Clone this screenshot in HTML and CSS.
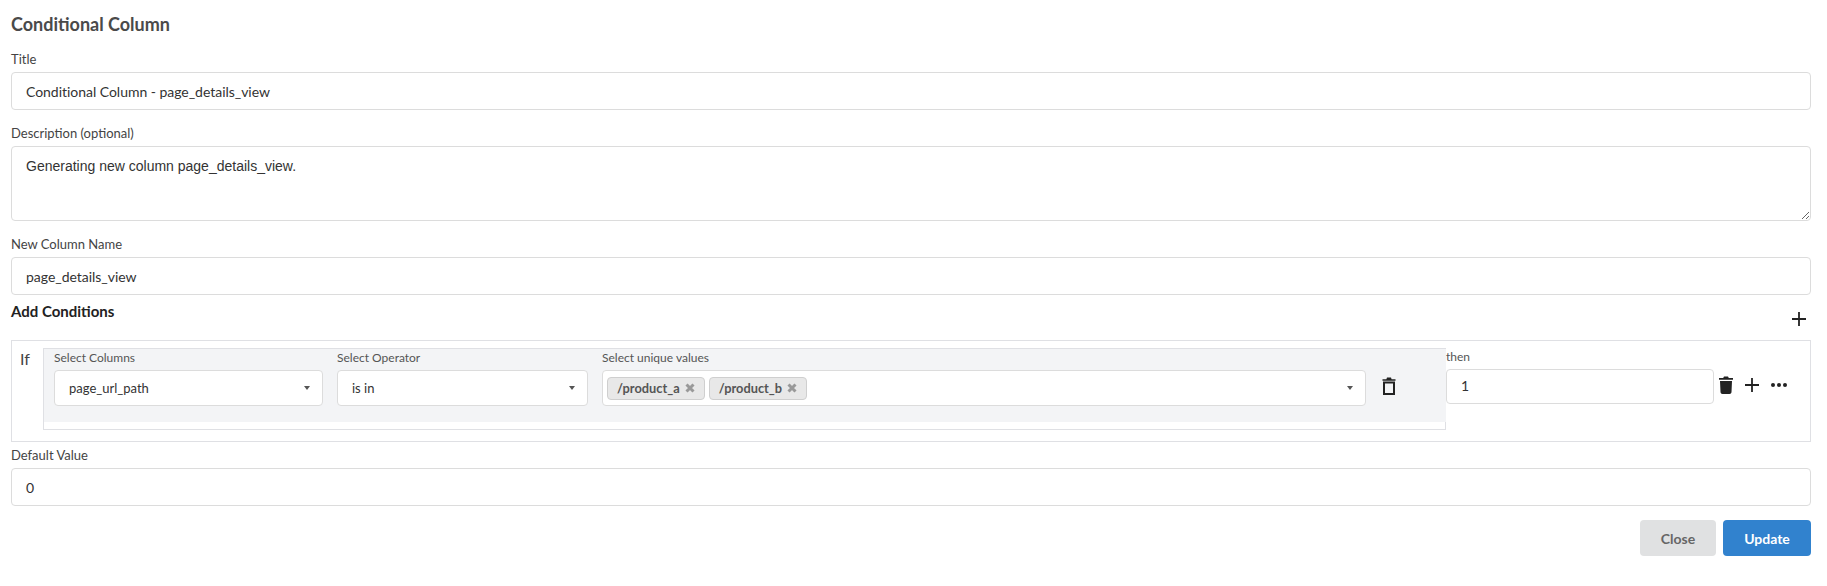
FILE: index.html
```
<!DOCTYPE html>
<html lang="en">
<head>
<meta charset="utf-8">
<title>Conditional Column</title>
<link rel="stylesheet" href="styles.css">
</head>
<body>
<main class="page">
  <h2 class="heading">Conditional Column</h2>
  <div class="group">
    <label class="label">Title</label>
    <div class="input">Conditional Column - page_details_view</div>
  </div>
  <div class="group">
    <label class="label">Description (optional)</label>
    <textarea class="textarea" spellcheck="false">Generating new column page_details_view.</textarea>
  </div>
  <div class="group-last">
    <label class="label">New Column Name</label>
    <div class="input">page_details_view</div>
  </div>
  <div class="conditions-head">
    <h3 class="subheading">Add Conditions</h3>
    <svg class="plus top-plus" viewBox="0 0 14 14" width="14" height="14"><path d="M7 0v14M0 7h14"/></svg>
  </div>
  <section class="conditions">
    <div class="if">If</div>
    <div class="clause">
      <div class="clause-fill">
        <div class="field-grid">
          <div>
            <div class="small-label">Select Columns</div>
            <div class="select">page_url_path<span class="caret"></span></div>
          </div>
          <div>
            <div class="small-label">Select Operator</div>
            <div class="select">is in<span class="caret"></span></div>
          </div>
          <div>
            <div class="small-label">Select unique values</div>
            <div class="select multi">
              <span class="chip">/product_a<svg class="chip-x" viewBox="0 0 10 10" width="10" height="10"><path d="M1.500 1.500l7 7M8.500 1.500l-7 7"/></svg></span>
              <span class="chip">/product_b<svg class="chip-x" viewBox="0 0 10 10" width="10" height="10"><path d="M1.500 1.500l7 7M8.500 1.500l-7 7"/></svg></span>
              <span class="caret"></span>
            </div>
          </div>
          <svg class="trash-outline" viewBox="0 0 14 18" width="14" height="18"><path class="fill" d="M.5 2.200h3.900L5 .5h4l.6 1.700h3.900v1.600H.5z"/><path class="line" d="M2 5.500h10v11.500H2z"/></svg>
        </div>
      </div>
    </div>
    <div class="then">
      <div class="then-label">then</div>
      <div class="input then-input">1</div>
    </div>
    <div class="row-actions">
      <svg class="trash-solid" viewBox="0 0 14 18" width="14" height="18"><path d="M0 2h4.200L5 .4h4l.8 1.600H14v1.800H0zM1 5h12l-.5 11c0 1.100-.9 2-2 2h-7c-1.100 0-2-.9-2-2z"/></svg>
      <svg class="plus" viewBox="0 0 14 14" width="14" height="14"><path d="M7 0v14M0 7h14"/></svg>
      <svg class="dots" viewBox="0 0 16 4" width="16" height="4"><circle cx="2" cy="2" r="2"/><circle cx="8" cy="2" r="2"/><circle cx="14" cy="2" r="2"/></svg>
    </div>
  </section>
  <div class="group-default">
    <label class="label">Default Value</label>
    <div class="input">0</div>
  </div>
  <div class="actions">
    <button class="btn btn-close" type="button">Close</button>
    <button class="btn btn-update" type="button">Update</button>
  </div>
</main>
</body>
</html>
```
FILE: styles.css
```
* { box-sizing: border-box; }
html, body { margin: 0; background: #fff; }
body { font-family: Lato, "Liberation Sans", sans-serif; color: #444; overflow: hidden; }
.page { padding: 14px 16px 0 11px; height: 586px; }
.heading { margin: 0 0 17px; font-size: 18px; line-height: 20px; font-weight: 700; color: #4a4a4a; }
.group { margin-bottom: 15px; }
.group-last { margin-bottom: 0; }
.group-default { margin-top: 5px; }
.label { display: block; font-size: 13px; line-height: 16px; margin-bottom: 5px; color: #444; }
.input {
  height: 38px; border: 1px solid #dcdcdc; border-radius: 4px; background: #fff;
  padding: 0 14px; font-size: 14px; letter-spacing: -0.03px; line-height: 37px; color: #333;
}
.textarea {
  display: block; width: 100%; height: 75px; border: 1px solid #dcdcdc; border-radius: 4px;
  padding: 11px 14px; margin: 0; font-family: "Liberation Sans", Arial, sans-serif; font-size: 14px; line-height: 17px;
  color: #333; outline: none; resize: vertical;
}
.conditions-head { height: 45px; display: flex; justify-content: space-between; align-items: flex-start; padding-top: 7px; }
.subheading { margin: 0; font-size: 15px; line-height: 18px; font-weight: 700; color: #222; }
.plus { fill: none; stroke: #222; stroke-width: 1.800; display: block; }
.top-plus { margin: 10px 5px 0 0; }
.conditions { height: 102px; border: 1px solid #dfe0e4; display: flex; align-items: flex-start; padding-top: 7px; }
.if { width: 31px; padding: 1px 0 0 8px; font-size: 16px; line-height: 19px; color: #444; flex: none; }
.clause { width: 1403px; height: 82px; flex: none; border: 1px solid #dfe0e4; }
.clause-fill { height: 73px; background: #f3f4f6; padding: 0 9px 0 10px; margin-right: -1px; }
.field-grid { display: grid; grid-template-columns: 268.500px 250.500px 764px 14px; column-gap: 14.500px; align-items: start; }
.field-grid .trash-outline { margin: 28px 0 0 1px; }
.small-label { font-size: 12px; line-height: 17px; margin-bottom: 4px; color: #555; }
.select {
  height: 36px; background: #fff; border: 1px solid #dcdcdc; border-radius: 4px; display: flex; align-items: center;
  padding: 0 12px 0 14px; font-size: 13px; color: #333;
}
.caret { margin-left: auto; width: 0; height: 0; border-left: 3.500px solid transparent; border-right: 3.500px solid transparent; border-top: 4px solid #555; }
.multi { padding: 0 12px 0 4px; gap: 4px; }
.chip {
  display: inline-flex; align-items: center; height: 23px; padding: 0 9px 0 9px; gap: 5px; background: #e8e8e8; border: 1px solid #cfcfcf;
  border-radius: 4px; font-size: 12.800px; font-weight: 700; color: #555;
}
.chip-x { fill: none; stroke: #999; stroke-width: 3; }
.trash-outline .fill { fill: #222; }
.trash-outline .line { fill: none; stroke: #222; stroke-width: 2; }
.then { width: 268px; flex: none; }
.then-label { font-size: 12px; line-height: 17px; margin: 0 0 4px; color: #555; }
.then-input { height: 35px; line-height: 32px; }
.row-actions { display: flex; align-items: center; height: 18px; margin-top: 28px; padding-left: 5px; }
.trash-solid { fill: #222; display: block; }
.row-actions .plus { margin-left: 12px; }
.dots { fill: #222; margin-left: 12px; }
.actions { display: flex; justify-content: flex-end; gap: 7px; margin-top: 14px; }
.btn { height: 36px; border: 0; border-radius: 4px; font-family: Lato, "Liberation Sans", sans-serif; font-size: 14px; font-weight: 700; }
.btn-close { width: 76px; background: #e0e1e2; color: #666; }
.btn-update { width: 88px; background: #3182ce; color: #fff; }
```
